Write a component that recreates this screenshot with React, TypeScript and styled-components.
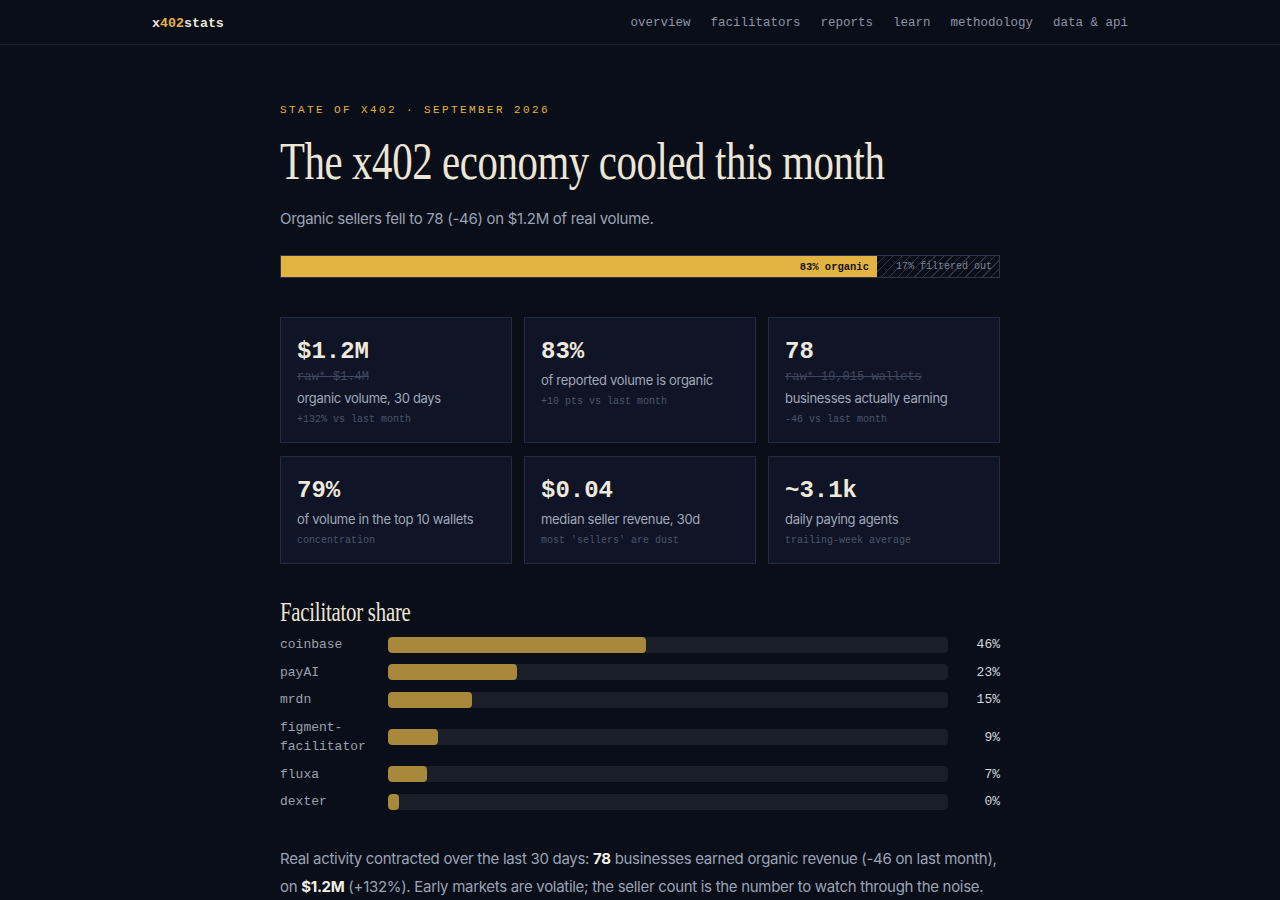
import React from "react";
import styled, { createGlobalStyle } from "styled-components";

const MONO = `"Liberation Mono", "DejaVu Sans Mono", monospace`;
const SANS = `Inter, "Noto Sans", sans-serif`;
const SERIF = `"Liberation Serif", "DejaVu Serif", serif`;

const Global = createGlobalStyle`
  html, body { margin: 0; padding: 0; background: #0a0e18; }
  body { font-family: ${SANS}; color: #9aa3b5; -webkit-font-smoothing: antialiased; }
  * { box-sizing: border-box; }
`;

const Page = styled.div`
  min-height: 900px;
  background: #0a0e18;
`;

const NavBar = styled.header`
  height: 45px;
  border-bottom: 1px solid #1c2333;
`;

const NavInner = styled.div`
  max-width: 1024px;
  margin: 0 auto;
  padding: 2px 24px 0;
  height: 44px;
  display: flex;
  align-items: center;
  justify-content: space-between;
`;

const Logo = styled.div`
  font-family: ${MONO};
  font-size: 13.3px;
  font-weight: 700;
  color: #ece7dc;
  span { color: #e3b341; }
`;

const NavLinks = styled.nav`
  display: flex;
  gap: 20px;
`;

const NavLink = styled.a`
  font-family: ${MONO};
  font-size: 12.5px;
  color: #8d95a6;
  text-decoration: none;
`;

const Main = styled.main`
  width: 720px;
  margin: 0 auto;
  padding: 57px 0 40px;
`;

const Eyebrow = styled.div`
  font-family: ${MONO};
  font-size: 11px;
  line-height: 16px;
  letter-spacing: 2.4px;
  color: #e3b341;
`;

const Title = styled.h1`
  font-family: ${SERIF};
  font-weight: 400;
  font-size: 52px;
  line-height: 60px;
  margin: 14px 0 0;
  color: #ede6d6;
  letter-spacing: -0.5px;
  transform: scaleX(0.785);
  transform-origin: left center;
  white-space: nowrap;
`;

const Lede = styled.p`
  font-size: 15px;
  line-height: 22px;
  letter-spacing: -0.3px;
  margin: 16px 0 0;
  color: #9aa3b5;
`;

const SplitBar = styled.div`
  margin-top: 25px;
  height: 23px;
  display: flex;
  border: 1px solid #2d3548;
`;

const Organic = styled.div`
  background: #e3b341;
  display: flex;
  align-items: center;
  justify-content: flex-end;
  padding-right: 8px;
  font-family: ${MONO};
  font-size: 10.5px;
  font-weight: 700;
  color: #141414;
`;

const Filtered = styled.div`
  flex: 1;
  display: flex;
  align-items: center;
  justify-content: flex-end;
  padding-right: 7px;
  font-family: ${MONO};
  font-size: 10px;
  color: #7b8496;
  background: repeating-linear-gradient(
    135deg,
    transparent 0 5px,
    #2c3446 5px 6px
  );
`;

const CardGrid = styled.div`
  margin-top: 39px;
  display: grid;
  grid-template-columns: repeat(3, 1fr);
  gap: 13px 12px;
`;

const Card = styled.div`
  background: #0f1527;
  border: 1px solid #232b40;
  padding: 21px 16px 15px;
`;

const Value = styled.div`
  font-family: ${MONO};
  font-weight: 700;
  font-size: 24px;
  line-height: 26px;
  color: #efe9dc;
`;

const Raw = styled.div`
  font-family: ${MONO};
  font-size: 12px;
  line-height: 16px;
  margin-top: 4px;
  color: #3f485e;
  text-decoration: line-through;
`;

const Label = styled.div<{ $afterRaw?: boolean }>`
  font-size: 13px;
  line-height: 18px;
  letter-spacing: -0.3px;
  margin-top: ${(p) => (p.$afterRaw ? "4px" : "6px")};
  color: #a0a8b8;
`;

const Delta = styled.div`
  font-family: ${MONO};
  font-size: 10px;
  line-height: 14px;
  margin-top: 6px;
  color: #4c556a;
`;

const SectionTitle = styled.h2`
  font-family: ${SERIF};
  font-weight: 400;
  font-size: 27px;
  line-height: 30px;
  margin: 33px 0 0;
  color: #ede6d6;
  letter-spacing: -0.3px;
  transform: scaleX(0.77);
  transform-origin: left center;
  white-space: nowrap;
`;

const Rows = styled.div`
  margin-top: 8px;
  display: flex;
  flex-direction: column;
  gap: 8px;
`;

const Row = styled.div`
  display: grid;
  grid-template-columns: 108px 1fr 52px;
  align-items: center;
`;

const RowLabel = styled.div`
  font-family: ${MONO};
  font-size: 13px;
  line-height: 19.5px;
  color: #9aa1ae;
  padding-right: 8px;
`;

const Track = styled.div`
  height: 16px;
  border-radius: 4px;
  background: #191e29;
  overflow: hidden;
`;

const Fill = styled.div`
  height: 100%;
  min-width: 11px;
  border-radius: 4px;
  background: #a8893c;
`;

const Pct = styled.div`
  font-family: ${MONO};
  font-size: 13px;
  text-align: right;
  color: #d2d5dc;
`;

const Summary = styled.p`
  margin: 33px 0 0;
  font-size: 15px;
  line-height: 28px;
  letter-spacing: -0.3px;
  color: #9aa3b5;
  b { color: #f3efe6; font-weight: 700; }
`;

const cards = [
  { value: "$1.2M", raw: "raw* $1.4M", label: "organic volume, 30 days", delta: "+132% vs last month" },
  { value: "83%", label: "of reported volume is organic", delta: "+10 pts vs last month" },
  { value: "78", raw: "raw* 19,015 wallets", label: "businesses actually earning", delta: "-46 vs last month" },
  { value: "79%", label: "of volume in the top 10 wallets", delta: "concentration" },
  { value: "$0.04", label: "median seller revenue, 30d", delta: "most 'sellers' are dust" },
  { value: "~3.1k", label: "daily paying agents", delta: "trailing-week average" },
];

const facilitators = [
  { name: "coinbase", pct: 46 },
  { name: "payAI", pct: 23 },
  { name: "mrdn", pct: 15 },
  { name: "figment-facilitator", pct: 9 },
  { name: "fluxa", pct: 7 },
  { name: "dexter", pct: 0 },
];

export default function App() {
  return (
    <Page>
      <Global />
      <NavBar>
        <NavInner>
          <Logo>
            x<span>402</span>stats
          </Logo>
          <NavLinks>
            {["overview", "facilitators", "reports", "learn", "methodology", "data & api"].map((l) => (
              <NavLink key={l} href="#">
                {l}
              </NavLink>
            ))}
          </NavLinks>
        </NavInner>
      </NavBar>
      <Main>
        <Eyebrow>STATE OF X402 · SEPTEMBER 2026</Eyebrow>
        <Title>The x402 economy cooled this month</Title>
        <Lede>Organic sellers fell to 78 (-46) on $1.2M of real volume.</Lede>
        <SplitBar>
          <Organic style={{ width: "83%" }}>83% organic</Organic>
          <Filtered>17% filtered out</Filtered>
        </SplitBar>
        <CardGrid>
          {cards.map((c) => (
            <Card key={c.value}>
              <Value>{c.value}</Value>
              {c.raw && <Raw>{c.raw}</Raw>}
              <Label $afterRaw={!!c.raw}>{c.label}</Label>
              <Delta>{c.delta}</Delta>
            </Card>
          ))}
        </CardGrid>
        <SectionTitle>Facilitator share</SectionTitle>
        <Rows>
          {facilitators.map((f) => (
            <Row key={f.name}>
              <RowLabel>{f.name}</RowLabel>
              <Track>
                <Fill style={{ width: `${f.pct}%` }} />
              </Track>
              <Pct>{f.pct}%</Pct>
            </Row>
          ))}
        </Rows>
        <Summary>
          Real activity contracted over the last 30 days: <b>78</b> businesses earned organic revenue (-46 on last
          month), on <b>$1.2M</b> (+132%). Early markets are volatile; the seller count is the number to watch through
          the noise.
        </Summary>
      </Main>
    </Page>
  );
}
